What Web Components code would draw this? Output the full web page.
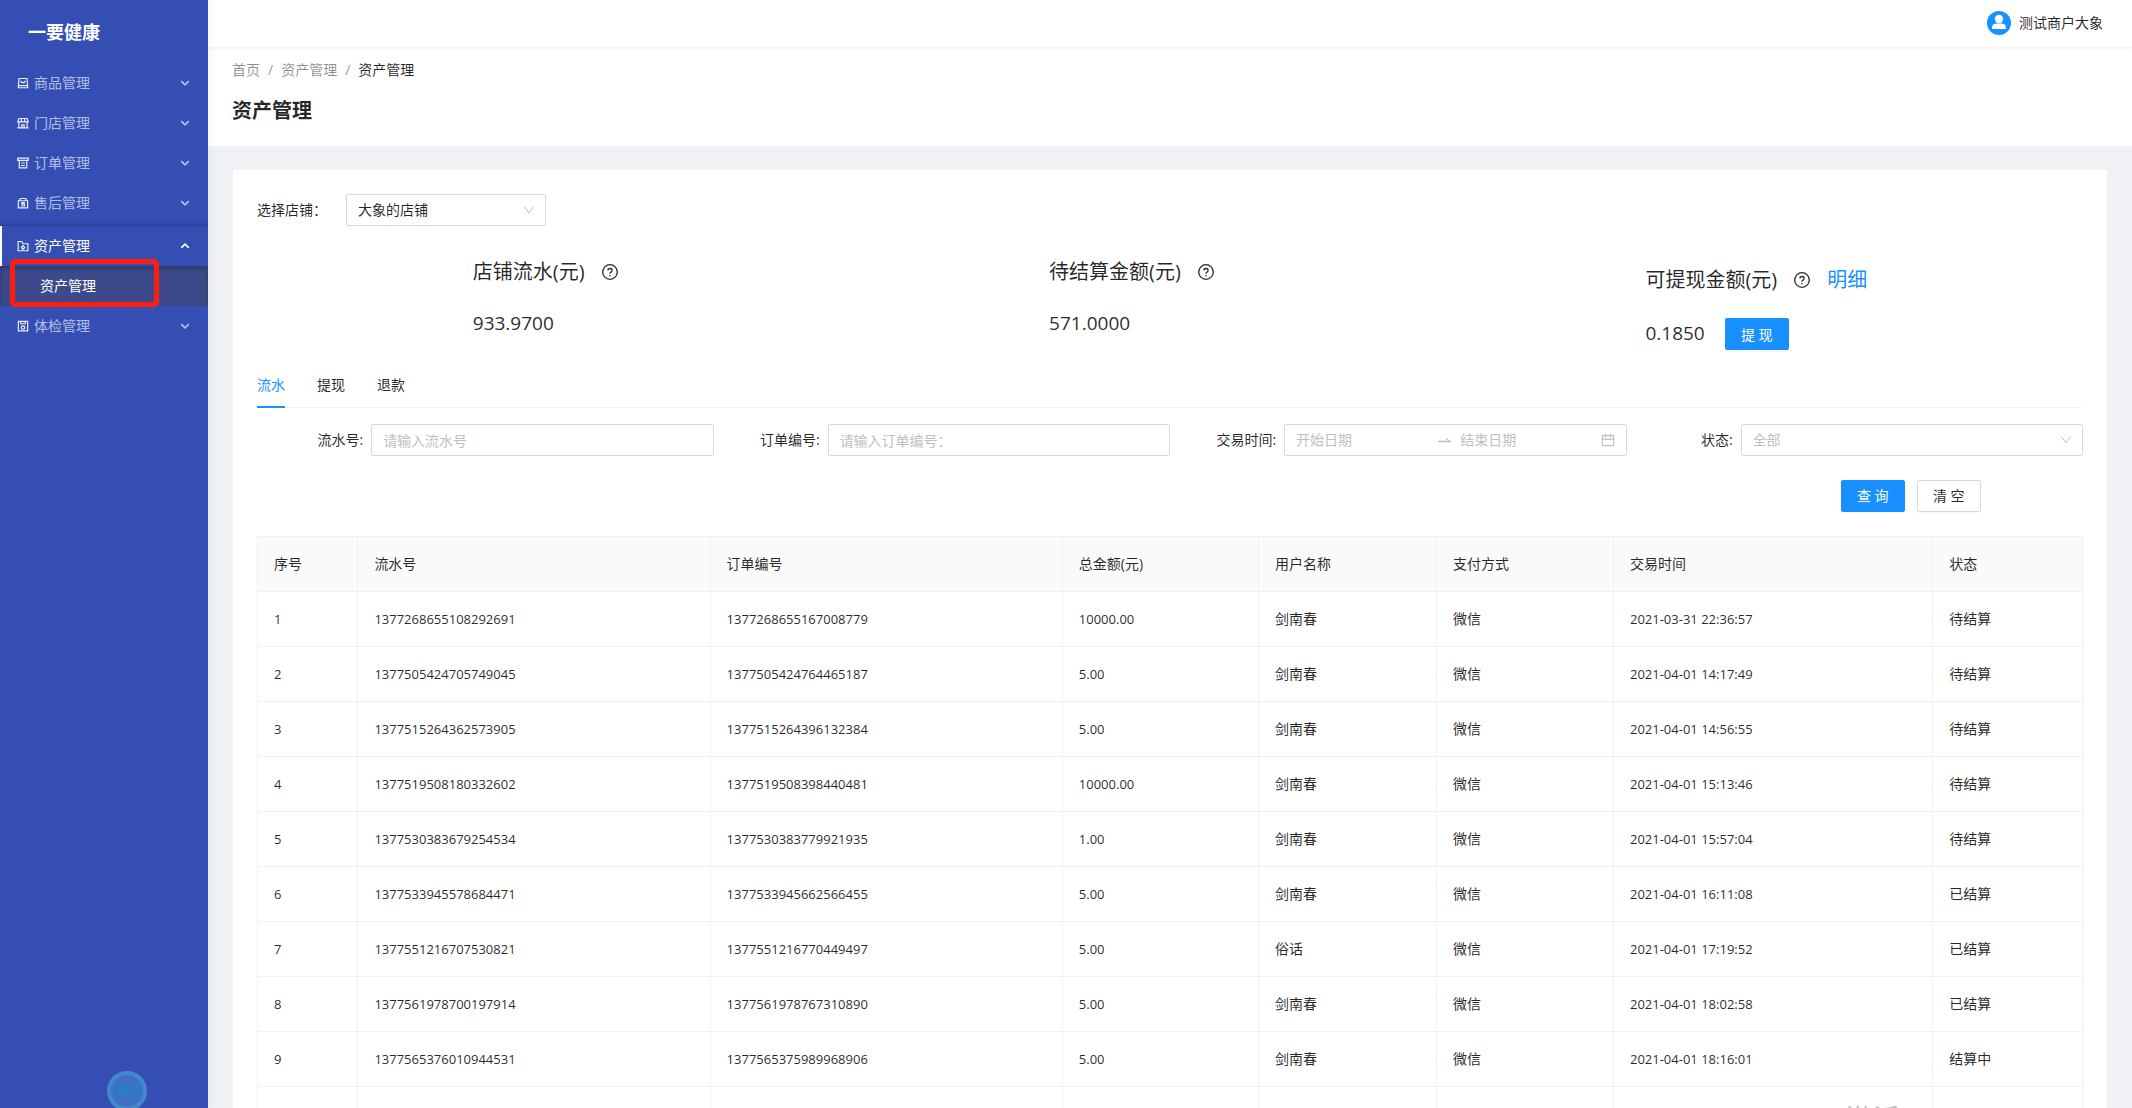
<!DOCTYPE html>
<html lang="zh-CN">
<head>
<meta charset="utf-8">
<title>资产管理</title>
<style>
html, body { margin: 0; height: 100%; overflow: hidden; }
body {
  font: 14px/22px "Open Sans", "Noto Sans CJK SC", sans-serif;
  color: rgba(0,0,0,.85);
  --primary: #1890ff;
  --line: #f0f0f0;
  --border: #d9d9d9;
  --muted: #bfbfbf;
  --side: #344eb4;
}
</style>
</head>
<body>
<app-shell>
  <side-menu slot="side"></side-menu>
  <top-bar slot="top"></top-bar>
  <page-head slot="head"></page-head>
  <asset-panel></asset-panel>
</app-shell>
<script>
const define = (name, html, setup) => {
  const tpl = document.createElement('template');
  tpl.innerHTML = html;
  customElements.define(name, class extends HTMLElement {
    connectedCallback() {
      if (this.shadowRoot) return;
      const root = this.attachShadow({ mode: 'open' });
      root.append(tpl.content.cloneNode(true));
      if (setup) setup(this, root);
    }
  });
};

/* Line icons on a 16 unit grid */
const icons = {
  goods: '<path d="M2.700 2h10.600l1 12.300H1.700zM2 11.500h12M5.300 5c0 3.500 5.400 3.500 5.400 0"/>',
  store: '<path d="M2.500 7v7.500h11V7M2.500 2h11l1.500 4.500H1zM5.800 2v4.500M10.200 2v4.500M6.500 14.500v-4h3v4M.5 14.500h15"/>',
  order: '<path d="M1 1.500h14v3H1zM3 4.500v10h10v-10M5.500 8h5M5.500 11.300h5"/>',
  after: '<path d="M1.800 5h12.400v9.500H1.800zM3 5l1.500-3h7L13 5M10.500 7.500h-4v2h3.500v2.500H5.500"/>',
  asset: '<path d="M1.500 14.300V2h5l1.500 3h6.500v9.300zM8 7.500l2.300 2.500L8 12.500 5.700 10z"/>',
  exam: '<path d="M1.800 1.800h12.400v12.700H1.800zM5 2v3h6V2"/><circle cx="8" cy="10" r="2.300"/>',
  down: '<path d="M3 5.500l5 5 5-5"/>',
  up: '<path d="M3 10.500l5-5 5 5"/>',
  select: '<path d="M2 3.500l6 8.500 6-8.500"/>',
  help: '<circle cx="8" cy="8" r="7.300"/><path d="M5.900 6.500c0-2.700 4.200-2.700 4.200 0 0 1.500-2.100 1.400-2.100 3.200M8 11v1.300"/>',
  calendar: '<path d="M1.500 3h13v11.500h-13zM1.500 7h13M5 1v4M11 1v4"/>',
  swap: '<path d="M2 9.500h12l-4-3"/>'
};
define('line-icon', `<style>
:host { display: inline-flex; flex: none; width: 16px; height: 16px; }
svg { width: 100%; height: 100%; fill: none; stroke: currentColor; stroke-width: var(--stroke, 1.3); }
</style><svg viewBox="0 0 16 16" aria-hidden="true"></svg>`, (el, root) => {
  root.querySelector('svg').innerHTML = icons[el.getAttribute('name')] || '';
});

define('app-shell', `<style>
:host { display: flex; height: 100vh; background: #eff1f5; }
.side { flex: 0 0 208px; z-index: 2; box-shadow: 2px 0 8px rgba(29,35,41,.05); }
.main { flex: 1; min-width: 0; display: flex; flex-direction: column; }
main { flex: 1; min-height: 0; overflow: hidden; padding: 24px 25px 0; }
</style>
<div class="side"><slot name="side"></slot></div>
<div class="main"><slot name="top"></slot><slot name="head"></slot><main><slot></slot></main></div>`);

define('menu-item', `<style>
:host { display: block; color: rgba(255,255,255,.65); }
button {
  all: unset; box-sizing: border-box; display: flex; align-items: center; gap: 5px;
  width: 100%; height: 40px; padding: 0 17px; cursor: pointer;
}
.icon { width: 12px; height: 12px; color: rgba(255,255,255,.9); --stroke: 1.6; }
.arrow { width: 12px; height: 12px; margin-left: auto; --stroke: 2.2; }
:host([open]) { color: #fff; margin-top: 3px; }
:host([open]) button { box-shadow: inset 2px 0 #fff, 0 0 4px rgba(0,0,0,.45); }
</style>
<button type="button"><line-icon class="icon"></line-icon><slot></slot><line-icon class="arrow"></line-icon></button>`,
(el, root) => {
  root.querySelector('.icon').setAttribute('name', el.getAttribute('icon'));
  root.querySelector('.arrow').setAttribute('name', el.hasAttribute('open') ? 'up' : 'down');
  root.querySelectorAll('line-icon').forEach(i => {
    i.shadowRoot && (i.shadowRoot.querySelector('svg').innerHTML = icons[i.getAttribute('name')]);
  });
});

define('side-menu', `<style>
:host { display: block; height: 100%; background: var(--side); overflow: hidden; position: relative; }
h1 { margin: 0; padding: 16px 28px 15px; font-size: 18px; line-height: 32px; font-weight: 700; color: #fff; }
.sub { position: relative; background: #3c4a8b; box-shadow: inset 0 3px 5px rgba(0,0,0,.25); }
.sub a { display: block; padding-left: 40px; line-height: 40px; color: #fff; text-decoration: none; }
.mark { position: absolute; left: 10px; top: -7px; width: 139px; height: 38px; border: 5px solid #ff1d10; border-radius: 5px; }
.env {
  position: absolute; left: 107px; bottom: -3px; width: 32px; height: 32px; border: 4px solid #4389ca;
  border-radius: 50%; background: #4070c4; color: #0d8cc4; font-size: 12px; line-height: 32px;
  display: flex; justify-content: center; white-space: nowrap;
}
</style>
<h1>一要健康</h1>
<nav>
<menu-item icon="goods">商品管理</menu-item>
<menu-item icon="store">门店管理</menu-item>
<menu-item icon="order">订单管理</menu-item>
<menu-item icon="after">售后管理</menu-item>
<menu-item icon="asset" open>资产管理</menu-item>
<div class="sub"><a href="#assets">资产管理</a><div class="mark"></div></div>
<menu-item icon="exam">体检管理</menu-item>
</nav>
<div class="env">P版环</div>`);

define('top-bar', `<style>
:host { display: flex; flex: none; height: 46px; padding-bottom: 1px; align-items: center; justify-content: flex-end; gap: 8px; padding-right: 29px;
  background: #fff; box-shadow: 0 1px 4px rgba(0,21,41,.08); position: relative; }
svg { width: 24px; height: 24px; }
</style>
<svg viewBox="0 0 24 24" aria-hidden="true"><circle cx="12" cy="12" r="12" fill="#1890ff"/><circle cx="12" cy="8" r="4.200" fill="#fff"/><path d="M5 18c0-6 3-5.500 7-5.500s7-.5 7 5.500z" fill="#fff"/></svg>
<span>测试商户大象</span>`);

define('page-head', `<style>
:host { display: block; flex: none; background: #fff; padding: 12px 24px 19px; }
nav { display: flex; gap: 8px; color: rgba(0,0,0,.45); }
a { color: inherit; text-decoration: none; }
b { font-weight: 400; color: rgba(0,0,0,.85); }
h2 { margin: 14px 0 0; font-size: 20px; line-height: 32px; font-weight: 700; }
</style>
<nav aria-label="breadcrumb"><a href="#home">首页</a><span>/</span><a href="#assets">资产管理</a><span>/</span><b>资产管理</b></nav>
<h2>资产管理</h2>`);

define('ui-button', `<style>
:host { display: inline-block; }
button { box-sizing: border-box; height: 32px; width: 64px; padding: 0; font: inherit; border-radius: 2px; cursor: pointer;
  border: 1px solid var(--border); background: #fff; color: rgba(0,0,0,.85); box-shadow: 0 2px 0 rgba(0,0,0,.02); white-space: pre; }
:host([primary]) button { background: var(--primary); border-color: var(--primary); color: #fff; }
</style><button type="button"><slot></slot></button>`);

define('ui-select', `<style>
:host { display: flex; align-items: center; }
label { white-space: nowrap; }
.box { position: relative; flex: 1; display: flex; align-items: center; }
select { appearance: none; width: 100%; height: 32px; padding: 0 30px 0 11px; border: 1px solid var(--border); border-radius: 2px;
  background: #fff; font: inherit; color: inherit; }
:host([muted]) select { color: var(--muted); }
line-icon { position: absolute; right: 11px; width: 12px; height: 12px; color: var(--muted); pointer-events: none; }
:host([field]) label { width: 25%; box-sizing: border-box; padding-right: 8px; text-align: right; }
:host(:not([field])) label { width: 89px; }
</style>
<label for="s"></label><div class="box"><select id="s"><option></option></select><line-icon name="select"></line-icon></div>`,
(el, root) => {
  root.querySelector('label').textContent = el.getAttribute('label');
  root.querySelector('option').textContent = el.getAttribute('value');
});

define('ui-field', `<style>
:host { display: flex; align-items: center; }
label { width: 25%; box-sizing: border-box; padding-right: 8px; text-align: right; white-space: nowrap; }
input { flex: 1; min-width: 0; box-sizing: border-box; height: 32px; padding: 0 11px; border: 1px solid var(--border); border-radius: 2px; font: inherit; }
input::placeholder { color: var(--muted); opacity: 1; }
</style><label for="i"></label><input id="i" type="text">`, (el, root) => {
  root.querySelector('label').textContent = el.getAttribute('label');
  root.querySelector('input').placeholder = el.getAttribute('placeholder');
});

define('ui-range', `<style>
:host { display: flex; align-items: center; }
label { width: 25%; box-sizing: border-box; padding-right: 8px; text-align: right; white-space: nowrap; }
.box { flex: 1; min-width: 0; box-sizing: border-box; height: 32px; display: flex; align-items: center; gap: 8px; padding: 0 11px;
  border: 1px solid var(--border); border-radius: 2px; color: var(--muted); }
input { flex: 1; min-width: 0; padding: 0; border: 0; font: inherit; outline: 0; background: none; }
input::placeholder { color: var(--muted); opacity: 1; }
.cal { width: 14px; height: 14px; }
</style><label for="a">交易时间:</label>
<div class="box"><input id="a" type="text" placeholder="开始日期"><line-icon name="swap"></line-icon><input type="text" placeholder="结束日期" aria-label="结束日期"><line-icon class="cal" name="calendar"></line-icon></div>`);

define('stat-item', `<style>
:host { display: flex; flex-direction: column; gap: 19px; font-size: 20px; line-height: 32px; }
.title { display: flex; align-items: center; gap: 17px; }
.value { display: flex; align-items: baseline; gap: 20px; font-size: 19px; }
:host([wide]) { gap: 13px; padding-top: 8px; }
:host([wide]) .title { padding-bottom: 8px; }
::slotted(ui-button) { font-size: 14px; }
::slotted(a) { color: var(--primary); text-decoration: none; }
</style>
<div class="title"><span id="t"></span><line-icon name="help"></line-icon><slot name="link"></slot></div>
<div class="value"><span id="v"></span><slot></slot></div>`, (el, root) => {
  root.getElementById('t').textContent = el.getAttribute('label');
  root.getElementById('v').textContent = el.getAttribute('value');
});

define('ui-tabs', `<style>
:host { display: flex; gap: 32px; border-bottom: 1px solid var(--line); }
button { all: unset; cursor: pointer; line-height: 22px; padding: 12px 0 10px; border-bottom: 2px solid transparent; margin-bottom: -1px; }
button[aria-selected=true] { color: var(--primary); border-color: var(--primary); }
</style><button role="tab" aria-selected="true">流水</button><button role="tab">提现</button><button role="tab">退款</button>`);

const rows = [
  ['1377268655108292691', '1377268655167008779', '10000.00', '剑南春', '2021-03-31 22:36:57', '待结算'],
  ['1377505424705749045', '1377505424764465187', '5.00', '剑南春', '2021-04-01 14:17:49', '待结算'],
  ['1377515264362573905', '1377515264396132384', '5.00', '剑南春', '2021-04-01 14:56:55', '待结算'],
  ['1377519508180332602', '1377519508398440481', '10000.00', '剑南春', '2021-04-01 15:13:46', '待结算'],
  ['1377530383679254534', '1377530383779921935', '1.00', '剑南春', '2021-04-01 15:57:04', '待结算'],
  ['1377533945578684471', '1377533945662566455', '5.00', '剑南春', '2021-04-01 16:11:08', '已结算'],
  ['1377551216707530821', '1377551216770449497', '5.00', '俗话', '2021-04-01 17:19:52', '已结算'],
  ['1377561978700197914', '1377561978767310890', '5.00', '剑南春', '2021-04-01 18:02:58', '已结算'],
  ['1377565376010944531', '1377565375989968906', '5.00', '剑南春', '2021-04-01 18:16:01', '结算中']
];
define('flow-table', `<style>
:host { display: block; }
table { width: 100%; table-layout: fixed; border-collapse: separate; border-spacing: 0; border: 1px solid var(--line); border-width: 1px 0 0 1px; }
th, td { box-sizing: border-box; height: 55px; padding: 0 16px; text-align: left; font-weight: 400; border: 1px solid var(--line); border-width: 0 1px 1px 0; }
th { background: #fafafa; }
.num { font-size: 13px; }
</style>
<table>
<colgroup><col style="width:5.5%"><col style="width:19.3%"><col style="width:19.3%"><col style="width:10.75%"><col style="width:9.75%"><col style="width:9.7%"><col style="width:17.5%"><col></colgroup>
<thead><tr><th>序号</th><th>流水号</th><th>订单编号</th><th>总金额(元)</th><th>用户名称</th><th>支付方式</th><th>交易时间</th><th>状态</th></tr></thead>
<tbody></tbody></table>`, (el, root) => {
  root.querySelector('tbody').innerHTML = rows.map(([a, b, c, d, e, f], i) =>
    `<tr><td class="num">${i + 1}</td><td class="num">${a}</td><td class="num">${b}</td><td class="num">${c}</td><td>${d}</td><td>微信</td><td class="num">${e}</td><td>${f}</td></tr>`
  ).join('') + '<tr>' + '<td></td>'.repeat(8) + '</tr>';
});

define('asset-panel', `<style>
:host { display: block; background: #fff; padding: 24px; }
.shop { width: 289px; }
.stats { display: flex; justify-content: space-around; align-items: flex-start; padding: 30px 0 11px; }
.filters { display: grid; grid-template-columns: repeat(4, minmax(0, 1fr)); padding-top: 16px; }
.actions { display: flex; justify-content: flex-end; gap: 12px; padding: 24px 5.6% 24px 0; }
</style>
<ui-select class="shop" label="选择店铺：" value="大象的店铺"></ui-select>
<div class="stats">
<stat-item label="店铺流水(元)" value="933.9700"></stat-item>
<stat-item label="待结算金额(元)" value="571.0000"></stat-item>
<stat-item wide label="可提现金额(元)" value="0.1850"><a slot="link" href="#detail">明细</a><ui-button primary>提 现</ui-button></stat-item>
</div>
<ui-tabs role="tablist"></ui-tabs>
<div class="filters">
<ui-field label="流水号:" placeholder="请输入流水号"></ui-field>
<ui-field label="订单编号:" placeholder="请输入订单编号："></ui-field>
<ui-range></ui-range>
<ui-select field muted label="状态:" value="全部"></ui-select>
</div>
<div class="actions"><ui-button primary>查 询</ui-button><ui-button>清 空</ui-button></div>
<flow-table></flow-table>`);

define('system-note', `<style>
:host { position: fixed; right: 110px; bottom: 0; height: 8px; overflow: hidden; font-size: 27px; line-height: 38px; color: #bdbdbd; pointer-events: none; }
</style><span>激活 Windows</span>`);
document.body.append(document.createElement('system-note'));
</script>
</body>
</html>
